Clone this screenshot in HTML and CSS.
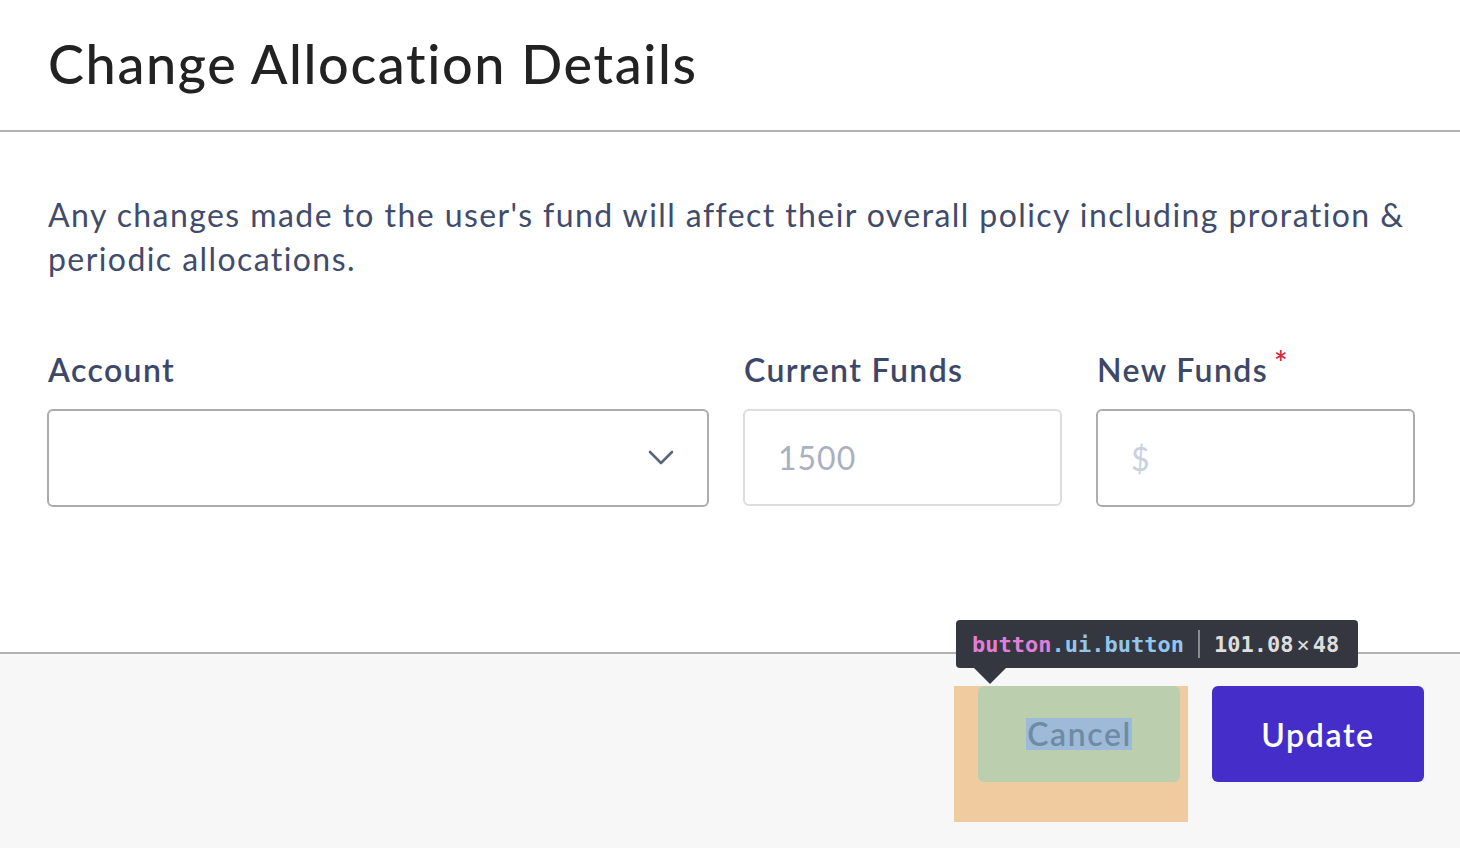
FILE: index.html
```html
<!DOCTYPE html>
<html lang="en">
<head>
<meta charset="utf-8">
<title>Change Allocation Details</title>
<link rel="stylesheet" href="styles.css">
</head>
<body>
<div class="modal">
  <header class="modal-header">
    <h1 class="modal-title">Change Allocation Details</h1>
  </header>
  <section class="modal-body">
    <p class="notice">Any changes made to the user's fund will affect their overall policy including proration &amp; periodic allocations.</p>
    <div class="fields">
      <div class="field">
        <label class="field-label">Account</label>
        <div class="control select">
          <svg class="chevron" width="26" height="16" viewBox="0 0 26 16"><path d="M2 2 L13 13 L24 2" fill="none" stroke="#5b6580" stroke-width="2.6" stroke-linecap="round" stroke-linejoin="round"/></svg>
        </div>
      </div>
      <div class="field">
        <label class="field-label">Current Funds</label>
        <div class="control disabled"><span class="placeholder">1500</span></div>
      </div>
      <div class="field">
        <label class="field-label">New Funds<span class="required">*</span></label>
        <div class="control"><span class="placeholder light">$</span></div>
      </div>
    </div>
  </section>
  <footer class="modal-footer">
    <div class="margin-box">
      <button class="btn btn-cancel"><span class="text-hl">Cancel</span></button>
      <div class="devtip">
        <span class="tag">button</span><span class="cls">.ui.button</span><span class="sep"></span><span class="dims">101.08<span class="times">×</span>48</span>
      </div>
    </div>
    <button class="btn btn-primary">Update</button>
  </footer>
</div>
</body>
</html>
```

FILE: styles.css
```css
* { box-sizing: border-box; }
html, body { margin: 0; padding: 0; }
body {
  font-family: Lato, "Open Sans", sans-serif;
  background: #ffffff;
  width: 1460px;
  height: 848px;
  overflow: hidden;
}
.modal {
  display: flex;
  flex-direction: column;
  height: 848px;
}
.modal-header {
  height: 132px;
  border-bottom: 2px solid #b1b1b1;
  display: flex;
  align-items: center;
  padding: 0 48px 2px;
}
.modal-title {
  margin: 0;
  font-size: 54px;
  line-height: 1;
  font-weight: 500;
  color: #222222;
  letter-spacing: 1.6px;
}
.modal-body {
  padding: 61px 45px 145px 47px;
}
.notice {
  margin: 0 0 70px 1px;
  font-size: 32px;
  line-height: 44px;
  color: #414b6c;
  letter-spacing: 1.42px;
}
.fields {
  display: grid;
  grid-template-columns: 662px 1fr 1fr;
  column-gap: 34px;
}
.field { display: flex; flex-direction: column; }
.field-label {
  font-size: 32px;
  line-height: 38px;
  font-weight: 600;
  color: #3d4768;
  margin: 0 0 20px 1px;
  letter-spacing: 1.4px;
  position: relative;
}
.required {
  color: #d2283f;
  font-size: 32px;
  vertical-align: top;
  margin-left: 6px;
  line-height: 24px;
}
.control {
  height: 98px;
  border: 2px solid #acacac;
  border-radius: 6px;
  background: #fff;
  display: flex;
  align-items: center;
  padding: 0 33px;
}
.control.disabled { border-color: #dddddd; height: 97px; }
.control.select { justify-content: flex-end; padding-right: 33px; }
.chevron { display: block; }
.placeholder {
  font-size: 32px;
  letter-spacing: 1px;
  color: #a9b0c2;
}
.placeholder.light { color: #c9d0de; }
.modal-footer {
  flex: 1;
  border-top: 2px solid #b1b1b1;
  background: #f7f7f7;
  display: flex;
  justify-content: flex-end;
  align-items: flex-start;
  padding: 32px 36px 0 0;
}
.margin-box {
  position: relative;
  background: #f0cba0;
  padding: 0 8px 40px 24px;
}
.btn {
  font-family: Lato, "Open Sans", sans-serif;
  border: none;
  border-radius: 6px;
  height: 96px;
  width: 202px;
  font-size: 32px;
  font-weight: 600;
  letter-spacing: 1.6px;
  display: flex;
  align-items: center;
  justify-content: center;
  padding: 0;
}
.btn-cancel {
  background: #bbcfae;
  color: #6f8ba3;
}
.text-hl {
  background: #9dbbd9;
  line-height: 32px;
  padding: 0 0 0 1px;
}
.btn-primary {
  margin-left: 24px;
  width: 212px;
  background: #452dca;
  color: #ffffff;
}
.devtip {
  position: absolute;
  left: 2px;
  top: -66px;
  height: 48px;
  width: 402px;
  background: #353740;
  border-radius: 4px;
  display: flex;
  align-items: center;
  padding: 0 16px;
  font-family: "DejaVu Sans Mono", "Liberation Mono", monospace;
  font-size: 22px;
  font-weight: bold;
  white-space: nowrap;
}
.devtip::after {
  content: "";
  position: absolute;
  left: 18px;
  bottom: -16px;
  border-left: 16px solid transparent;
  border-right: 16px solid transparent;
  border-top: 16px solid #353740;
}
.tag { color: #e07fda; }
.cls { color: #93c6ec; }
.sep {
  display: inline-block;
  flex: none;
  width: 2px;
  height: 28px;
  background: #8a8c93;
  margin: 0 14px;
}
.dims { color: #dedede; }
.times { margin: 0 3px; font-weight: normal; }
```
